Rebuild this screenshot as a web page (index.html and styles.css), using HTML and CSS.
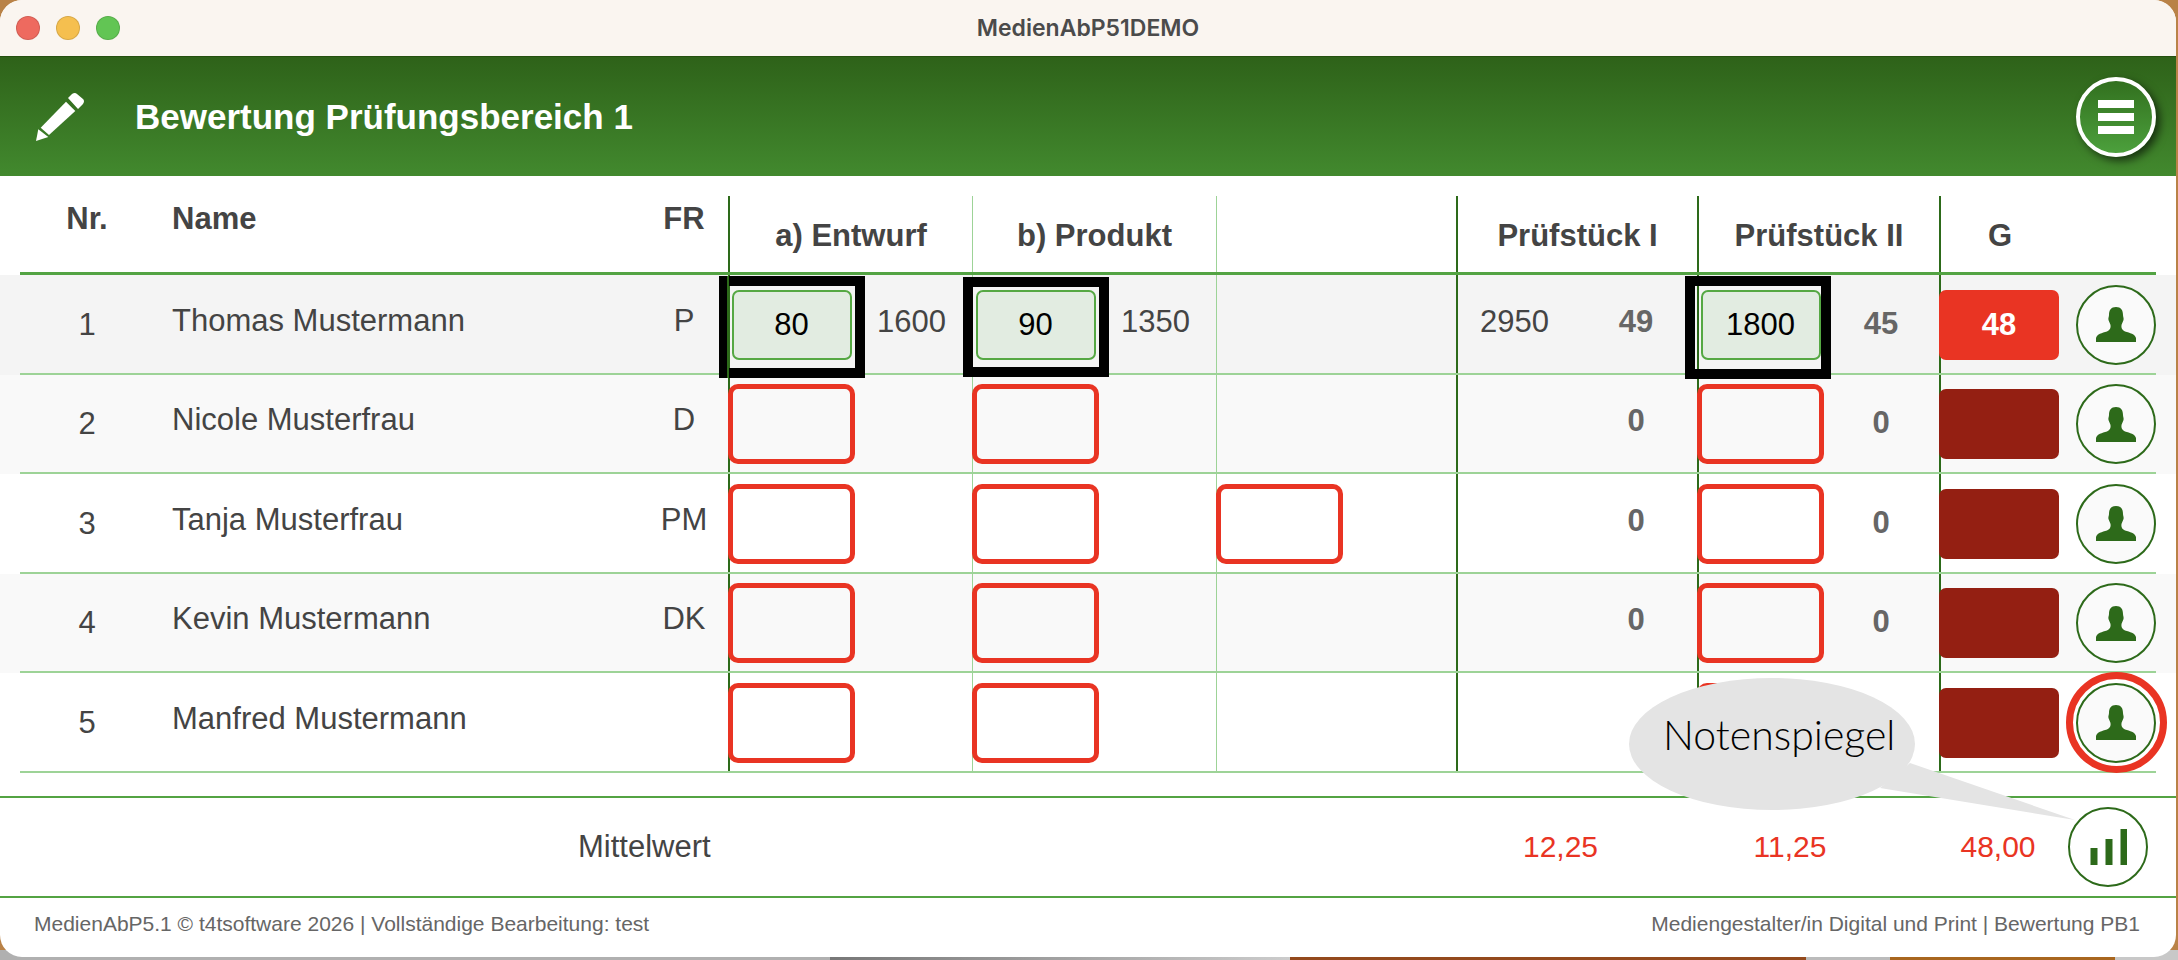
FILE: index.html
```html
<!DOCTYPE html>
<html lang="de">
<head>
  <meta charset="UTF-8">
  <title>MedienAbP51DEMO</title>
  <link rel="stylesheet" href="styles.css">
</head>
<body>
  <div class="window">
    <div class="titlebar">
      <div class="lights">
        <span class="light red"></span>
        <span class="light yellow"></span>
        <span class="light green"></span>
      </div>
      <div class="app-title">MedienAbP51DEMO</div>
    </div>

    <header class="header">
      <svg class="pencil" viewBox="34 90 52 52">
        <path fill="#fff" d="M68 97 L72 93 Q75 91 77 93 L83 98 Q85 100 83 103 L78 108 Z"/>
        <path fill="#fff" d="M66 100.7 L75.3 110 L49 134 L40.7 126.7 Z"/>
        <path fill="#fff" d="M38.3 128.3 L48.3 136 L36 140 Z"/>
      </svg>
      <h1>Bewertung Prüfungsbereich 1</h1>
      <button class="menu-btn">
        <span></span><span></span><span></span>
      </button>
    </header>

    <div class="table">
      <div class="grid head">
        <div class="nr">Nr.</div>
        <div class="name">Name</div>
        <div class="fr">FR</div>
        <div class="cell strong center">a) Entwurf</div>
        <div class="cell center">b) Produkt</div>
        <div class="cell"></div>
        <div class="cell strong center">Prüfstück I</div>
        <div class="cell strong center">Prüfstück II</div>
        <div class="cell strong g-head">G</div>
        <div></div>
      </div>

      <div class="row shade-1">
        <div class="grid">
          <div class="nr">1</div>
          <div class="name">Thomas Mustermann</div>
          <div class="fr">P</div>
          <div class="cell strong">
            <div class="slot"><div class="field ok">80<i class="frame frame-a"></i></div></div>
            <span class="sum">1600</span>
          </div>
          <div class="cell">
            <div class="slot"><div class="field ok">90<i class="frame frame-b"></i></div></div>
            <span class="sum">1350</span>
          </div>
          <div class="cell"></div>
          <div class="cell strong first-part">
            <span class="total">2950</span>
            <span class="score up">49</span>
          </div>
          <div class="cell strong">
            <div class="slot"><div class="field ok">1800<i class="frame frame-c"></i></div></div>
            <span class="score">45</span>
          </div>
          <div class="cell strong"><div class="grade">48</div></div>
          <div class="action"><button class="round"><svg class="person" viewBox="0 0 40 35"><path d="M20 0C25 0 27 3 27 8C27 10 28 11 27.5 13C27 15 26 16 25.5 18C25 21 26 23 29 24.5C34 26 39 27 40 31L40 35L0 35L0 31C1 27 6 26 11 24.5C14 23 15 21 14.5 18C14 16 13 15 12.5 13C12 11 13 10 13 8C13 3 15 0 20 0Z"/></svg></button></div>
        </div>
      </div>

      <div class="row shade-2">
        <div class="grid">
          <div class="nr">2</div>
          <div class="name">Nicole Musterfrau</div>
          <div class="fr">D</div>
          <div class="cell strong"><div class="slot"><div class="field empty"></div></div></div>
          <div class="cell"><div class="slot"><div class="field empty"></div></div></div>
          <div class="cell"></div>
          <div class="cell strong first-part"><span class="total"></span><span class="score up">0</span></div>
          <div class="cell strong"><div class="slot"><div class="field empty"></div></div><span class="score">0</span></div>
          <div class="cell strong"><div class="grade off"></div></div>
          <div class="action"><button class="round"><svg class="person" viewBox="0 0 40 35"><path d="M20 0C25 0 27 3 27 8C27 10 28 11 27.5 13C27 15 26 16 25.5 18C25 21 26 23 29 24.5C34 26 39 27 40 31L40 35L0 35L0 31C1 27 6 26 11 24.5C14 23 15 21 14.5 18C14 16 13 15 12.5 13C12 11 13 10 13 8C13 3 15 0 20 0Z"/></svg></button></div>
        </div>
      </div>

      <div class="row">
        <div class="grid">
          <div class="nr">3</div>
          <div class="name">Tanja Musterfrau</div>
          <div class="fr">PM</div>
          <div class="cell strong"><div class="slot"><div class="field empty"></div></div></div>
          <div class="cell"><div class="slot"><div class="field empty"></div></div></div>
          <div class="cell"><div class="slot"><div class="field empty"></div></div></div>
          <div class="cell strong first-part"><span class="total"></span><span class="score up">0</span></div>
          <div class="cell strong"><div class="slot"><div class="field empty"></div></div><span class="score">0</span></div>
          <div class="cell strong"><div class="grade off"></div></div>
          <div class="action"><button class="round"><svg class="person" viewBox="0 0 40 35"><path d="M20 0C25 0 27 3 27 8C27 10 28 11 27.5 13C27 15 26 16 25.5 18C25 21 26 23 29 24.5C34 26 39 27 40 31L40 35L0 35L0 31C1 27 6 26 11 24.5C14 23 15 21 14.5 18C14 16 13 15 12.5 13C12 11 13 10 13 8C13 3 15 0 20 0Z"/></svg></button></div>
        </div>
      </div>

      <div class="row shade-2">
        <div class="grid">
          <div class="nr">4</div>
          <div class="name">Kevin Mustermann</div>
          <div class="fr">DK</div>
          <div class="cell strong"><div class="slot"><div class="field empty"></div></div></div>
          <div class="cell"><div class="slot"><div class="field empty"></div></div></div>
          <div class="cell"></div>
          <div class="cell strong first-part"><span class="total"></span><span class="score up">0</span></div>
          <div class="cell strong"><div class="slot"><div class="field empty"></div></div><span class="score">0</span></div>
          <div class="cell strong"><div class="grade off"></div></div>
          <div class="action"><button class="round"><svg class="person" viewBox="0 0 40 35"><path d="M20 0C25 0 27 3 27 8C27 10 28 11 27.5 13C27 15 26 16 25.5 18C25 21 26 23 29 24.5C34 26 39 27 40 31L40 35L0 35L0 31C1 27 6 26 11 24.5C14 23 15 21 14.5 18C14 16 13 15 12.5 13C12 11 13 10 13 8C13 3 15 0 20 0Z"/></svg></button></div>
        </div>
      </div>

      <div class="row">
        <div class="grid">
          <div class="nr">5</div>
          <div class="name">Manfred Mustermann</div>
          <div class="fr"></div>
          <div class="cell strong"><div class="slot"><div class="field empty"></div></div></div>
          <div class="cell"><div class="slot"><div class="field empty"></div></div></div>
          <div class="cell"></div>
          <div class="cell strong first-part"><span class="total"></span></div>
          <div class="cell strong"><div class="slot"><div class="field empty"></div></div></div>
          <div class="cell strong"><div class="grade off"></div></div>
          <div class="action"><button class="round ringed"><svg class="person" viewBox="0 0 40 35"><path d="M20 0C25 0 27 3 27 8C27 10 28 11 27.5 13C27 15 26 16 25.5 18C25 21 26 23 29 24.5C34 26 39 27 40 31L40 35L0 35L0 31C1 27 6 26 11 24.5C14 23 15 21 14.5 18C14 16 13 15 12.5 13C12 11 13 10 13 8C13 3 15 0 20 0Z"/></svg></button></div>
        </div>
      </div>
    </div>

    <div class="means">
      <div class="grid">
        <div class="mean-label">Mittelwert</div>
        <div class="mean m-first">12,25</div>
        <div class="mean m-second">11,25</div>
        <div class="mean m-grade">48,00</div>
        <div class="action chart-cell">
          <button class="round">
            <svg class="chart" viewBox="0 0 36 36">
              <rect x="0" y="19" width="7" height="17"/>
              <rect x="15" y="10" width="7" height="26"/>
              <rect x="30" y="0" width="7" height="36"/>
            </svg>
          </button>
        </div>
      </div>
    </div>

    <footer class="footer">
      <span>MedienAbP5.1 © t4tsoftware 2026 | Vollständige Bearbeitung: test</span>
      <span>Mediengestalter/in Digital und Print | Bewertung PB1</span>
    </footer>

    <div class="bubble">
      <svg viewBox="0 0 450 145" width="450" height="145">
        <ellipse cx="143" cy="66" rx="143" ry="66" fill="#e4e4e4"/>
        <polygon points="281,85 446,142 251,110" fill="#e4e4e4"/>
      </svg>
      <span class="bubble-text">Notenspiegel</span>
    </div>
  </div>
</body>
</html>
```

FILE: styles.css
```css
* {
  box-sizing: border-box;
}

body {
  margin: 0;
  height: 960px;
  overflow: hidden;
  font-family: "Liberation Sans", Arial, sans-serif;
  color: #444;
  background:
    linear-gradient(90deg, #b0b0b0 0, #b0b0b0 830px, #777 830px, #ccc 1290px, #93491c 1290px, #93491c 1806px, #bbb 1806px, #bbb 1890px, #a8661f 1890px, #a8661f 2115px, #c8c8c8 2115px) bottom / 100% 10px no-repeat,
    #b98247;
}

.window {
  position: relative;
  width: 2176px;
  height: 957px;
  background: #fff;
  border-radius: 22px;
  overflow: hidden;
}

/* title bar */
.titlebar {
  position: relative;
  height: 56px;
  background: #faf5f0;
  display: flex;
  align-items: center;
  justify-content: center;
}

.lights {
  position: absolute;
  left: 16px;
  display: flex;
  gap: 16px;
}

.light {
  width: 24px;
  height: 24px;
  border-radius: 50%;
  border: 1px solid rgba(0, 0, 0, 0.12);
}

.light.red {
  background: #ee6a5f;
}

.light.yellow {
  background: #f5bf4f;
}

.light.green {
  background: #62c554;
}

.app-title {
  font-family: Inter, "Liberation Sans", sans-serif;
  font-weight: 600;
  font-size: 23px;
  color: #4b4b4b;
}

/* green header */
.header {
  height: 120px;
  padding-left: 34px;
  padding-right: 20px;
  display: flex;
  align-items: center;
  background: linear-gradient(#2e6219, #42892e);
  border-top: 1px solid #24500f;
}

.pencil {
  width: 52px;
  height: 52px;
}

.header h1 {
  margin: 0 0 0 49px;
  flex: 1;
  font-size: 35px;
  font-weight: bold;
  color: #fff;
}

.menu-btn {
  width: 80px;
  height: 80px;
  padding: 0;
  border: 4px solid #fff;
  border-radius: 50%;
  background: linear-gradient(#32701f, #4ca03c);
  box-shadow: 4px 4px 8px rgba(0, 0, 0, 0.6);
  display: flex;
  flex-direction: column;
  align-items: center;
  justify-content: center;
  gap: 5px;
}

.menu-btn span {
  width: 36px;
  height: 8px;
  background: #fff;
}

/* table */
.grid {
  display: grid;
  grid-template-columns: 152px 468px 88px 244px 244px 240px 241px 242px 126px 91px;
  margin: 0 20px;
}

.head {
  height: 79px;
  margin-top: 20px;
  border-bottom: 3px solid #53a343;
  font-size: 31px;
  font-weight: bold;
  line-height: 38px;
}

.head .nr,
.head .name,
.head .fr {
  padding-top: 4px;
}

.head .center,
.head .g-head {
  padding-top: 4px;
  justify-content: center;
}

.head .g-head {
  padding-right: 6px;
}

.nr {
  padding-right: 18px;
  text-align: center;
}

.fr {
  text-align: center;
}

.row {
  height: 99.5px;
}

.row .grid {
  height: 100%;
  border-bottom: 2px solid #9dd397;
  font-size: 31px;
  align-items: stretch;
}

.shade-1 {
  background: #f4f4f4;
}

.shade-2 {
  background: #f9f9f9;
}

.row .nr,
.row .name,
.row .fr {
  align-self: center;
}

.row .nr {
  padding-top: 2px;
}

.row .name,
.row .fr {
  padding-bottom: 6px;
}

.cell {
  display: flex;
  align-items: center;
  border-left: 1px solid #9dd397;
}

.cell.strong {
  border-left: 2px solid #2d6a1a;
}

.head .cell:nth-child(5) {
  border-left: 1px solid #9dd397;
}

.slot {
  position: relative;
  flex: none;
  width: 127px;
  display: flex;
  justify-content: center;
}

.cell.strong .slot {
  margin-left: -2px;
}

.cell:not(.strong) .slot {
  margin-left: -1px;
}

.field {
  position: relative;
  border-radius: 10px;
  display: flex;
  align-items: center;
  justify-content: center;
}

.field.ok {
  width: 120px;
  height: 70px;
  margin-top: 2px;
  background: #e2ece1;
  border: 2px solid #55a843;
  border-radius: 7px;
  color: #000;
}

.field.empty {
  width: 127px;
  height: 80px;
  margin-top: 2px;
  border: 5px solid #e93423;
}

.frame {
  position: absolute;
  border: 10px solid #000;
}

.frame-a {
  inset: -16px -15px -20px -15px;
}

.frame-a::after {
  content: "";
  position: absolute;
  left: -2px;
  top: -10px;
  bottom: -10px;
  width: 2px;
  background: #2d6a1a;
}

.frame-b {
  inset: -15px -15px -19px -15px;
}

.frame-c {
  inset: -16px -12px -21px -18px;
}

.sum {
  margin-left: 22px;
  padding-bottom: 4px;
}

.first-part {
  display: grid;
  grid-template-columns: 148px 60px;
  align-items: center;
}

.total {
  padding-left: 22px;
  padding-bottom: 4px;
}

.score {
  width: 60px;
  margin-left: 27px;
  text-align: center;
  font-weight: bold;
  color: #666;
}

.score.up {
  margin-left: 0;
  padding-bottom: 4px;
}

.grade {
  width: 120px;
  height: 70px;
  margin-left: -2px;
  margin-top: 2px;
  border-radius: 7px;
  background: #e93423;
  color: #fff;
  font-weight: bold;
  display: flex;
  align-items: center;
  justify-content: center;
}

.grade.off {
  background: #941f12;
}

.action {
  display: flex;
  align-items: center;
  justify-content: flex-end;
}

.round {
  position: relative;
  width: 80px;
  height: 80px;
  margin-top: 2px;
  padding: 0;
  border: 2.5px solid #2d6a1a;
  border-radius: 50%;
  background: #fafafa;
  display: flex;
  align-items: center;
  justify-content: center;
}

.ringed::after {
  content: "";
  position: absolute;
  inset: -12.5px;
  border: 7px solid #e93423;
  border-radius: 50%;
}

.person {
  width: 40px;
  height: 35px;
  fill: #2d6a1a;
}

/* averages */
.means {
  margin-top: 23px;
  height: 102px;
  border-top: 2px solid #53a343;
  border-bottom: 2px solid #53a343;
}

.means .grid {
  height: 98px;
  font-size: 31px;
  align-items: center;
}

.mean-label {
  grid-column: 1 / 5;
  padding-left: 558px;
}

.mean {
  color: #e93423;
  text-align: center;
  font-size: 30px;
}

.m-first {
  grid-column: 7;
  padding-right: 32px;
}

.m-second {
  grid-column: 8;
  padding-left: 0;
  padding-right: 56px;
}

.m-grade {
  grid-column: 9;
  padding-right: 8px;
}

.chart-cell {
  grid-column: 10;
  padding-right: 8px;
}

.chart-cell .round {
  margin-top: 0;
  background: #fff;
}

.chart {
  width: 37px;
  height: 36px;
  fill: #2d6a1a;
}

/* footer */
.footer {
  height: 57px;
  padding: 0 36px 4px 34px;
  display: flex;
  align-items: center;
  justify-content: space-between;
  font-size: 21px;
  color: #666;
}

/* speech bubble over the table */
.bubble {
  position: absolute;
  left: 1629px;
  top: 678px;
  width: 450px;
  height: 145px;
}

.bubble-text {
  position: absolute;
  left: 34px;
  top: 32px;
  font-family: Lato, sans-serif;
  font-weight: 300;
  font-size: 41px;
  color: #000;
}
```
